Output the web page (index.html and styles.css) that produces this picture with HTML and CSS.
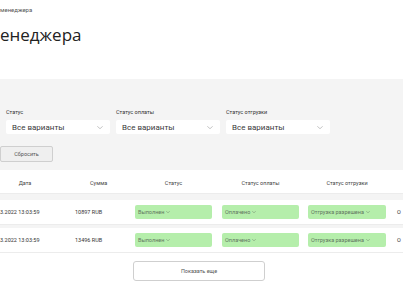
FILE: index.html
```html
<!DOCTYPE html>
<html lang="ru">
<head>
<meta charset="utf-8">
<link rel="stylesheet" href="styles.css">
</head>
<body>
<div class="page">
  <div class="breadcrumb">менеджера</div>
  <h1 class="title">енеджера</h1>

  <section class="filters">
    <div class="filter-grid">
      <div class="field">
        <div class="label">Статус</div>
        <div class="select"><span>Все варианты</span><svg class="chev" viewBox="0 0 6 3"><path d="M0.3 0.3 L3 2.7 L5.7 0.3"/></svg></div>
      </div>
      <div class="field">
        <div class="label">Статус оплаты</div>
        <div class="select"><span>Все варианты</span><svg class="chev" viewBox="0 0 6 3"><path d="M0.3 0.3 L3 2.7 L5.7 0.3"/></svg></div>
      </div>
      <div class="field">
        <div class="label">Статус отгрузки</div>
        <div class="select"><span>Все варианты</span><svg class="chev" viewBox="0 0 6 3"><path d="M0.3 0.3 L3 2.7 L5.7 0.3"/></svg></div>
      </div>
    </div>
    <button class="reset">Сбросить</button>
  </section>

  <div class="table">
    <div class="row head">
      <div class="c c-date">Дата</div>
      <div class="c c-sum">Сумма</div>
      <div class="c">Статус</div>
      <div class="c">Статус оплаты</div>
      <div class="c">Статус отгрузки</div>
      <div class="c"></div>
    </div>
    <div class="body">
      <div class="row item">
        <div class="c c-date">3.2022 13:03:59</div>
        <div class="c c-sum">10897 RUB</div>
        <div class="c"><span class="badge">Выполнен <svg class="bchev" viewBox="0 0 6 3"><path d="M0.3 0.3 L3 2.7 L5.7 0.3"/></svg></span></div>
        <div class="c"><span class="badge">Оплачено <svg class="bchev" viewBox="0 0 6 3"><path d="M0.3 0.3 L3 2.7 L5.7 0.3"/></svg></span></div>
        <div class="c c-ship"><span class="badge">Отгрузка разрешена <svg class="bchev" viewBox="0 0 6 3"><path d="M0.3 0.3 L3 2.7 L5.7 0.3"/></svg></span></div>
        <div class="c c-last">О</div>
      </div>
      <div class="row item">
        <div class="c c-date">3.2022 13:03:59</div>
        <div class="c c-sum">13496 RUB</div>
        <div class="c"><span class="badge">Выполнен <svg class="bchev" viewBox="0 0 6 3"><path d="M0.3 0.3 L3 2.7 L5.7 0.3"/></svg></span></div>
        <div class="c"><span class="badge">Оплачено <svg class="bchev" viewBox="0 0 6 3"><path d="M0.3 0.3 L3 2.7 L5.7 0.3"/></svg></span></div>
        <div class="c c-ship"><span class="badge">Отгрузка разрешена <svg class="bchev" viewBox="0 0 6 3"><path d="M0.3 0.3 L3 2.7 L5.7 0.3"/></svg></span></div>
        <div class="c c-last">О</div>
      </div>
    </div>
  </div>

  <div class="more-wrap">
    <button class="more">Показать еще</button>
  </div>
</div>
</body>
</html>
```

FILE: styles.css
```css
* { box-sizing: border-box; }
html, body { margin: 0; padding: 0; background: #fff; }
body {
  width: 403px;
  height: 294px;
  overflow: hidden;
  font-family: Roboto, "Liberation Sans", Arial, sans-serif;
  color: #333;
}
.page { padding-top: 6px; }

.breadcrumb {
  font-size: 6px;
  line-height: 8px;
  color: #555;
}
.title {
  margin: 10px 0 0 0;
  font-family: "Open Sans", "Noto Sans", sans-serif;
  font-weight: 400;
  font-size: 17px;
  line-height: 22px;
  color: #222;
}

.filters {
  margin-top: 33px;
  background: #f4f4f4;
  padding: 29px 0 8px 0;
}
.filter-grid {
  display: grid;
  grid-template-columns: 104px 104px 104px;
  column-gap: 6px;
  padding-left: 6px;
}
.label {
  font-size: 5.5px;
  line-height: 8px;
  color: #333;
  margin-bottom: 4px;
}
.select {
  height: 14px;
  background: #fff;
  border-radius: 2px;
  display: flex;
  align-items: center;
  justify-content: space-between;
  padding: 0 7px 0 6px;
  font-size: 8px;
  color: #3a3a3a;
}
.chev {
  width: 6px;
  height: 3px;
  fill: none;
  stroke: #a0a0a0;
  stroke-width: 0.6;
}
.reset {
  display: block;
  margin-top: 12px;
  width: 53px;
  height: 16px;
  padding: 0;
  background: #efefef;
  border: 1px solid #cfcfcf;
  border-radius: 2px;
  font-family: Roboto, "Liberation Sans", Arial, sans-serif;
  font-size: 5.5px;
  color: #555;
}

.table { width: 403px; overflow: hidden; }
.row {
  display: grid;
  grid-template-columns: 70px 60px 87px 87px 86px 13px;
  align-items: center;
}
.head {
  height: 24px;
  padding-top: 2px;
  font-size: 5.5px;
  color: #444;
  text-align: center;
  background: #fff;
  border-bottom: 1px solid #ececec;
}
.head .c-date { padding-right: 20px; }
.head .c-sum { padding-left: 20px; text-align: left; }
.body {
  background: #f4f4f4;
  padding-top: 6px;
  display: flex;
  flex-direction: column;
  gap: 3px;
}
.item {
  height: 25px;
  background: #fff;
  border-bottom: 1px solid #ececec;
  font-size: 5.5px;
  color: #333;
}
.item .c-sum { padding-left: 5px; }
.item .c { display: flex; align-items: center; }
.item .c .badge { margin: 0 5px; }
.item .c-ship .badge { margin: 0 4px; }
.item .c-last { padding-left: 7px; }
.badge {
  flex: 1;
  height: 14px;
  display: flex;
  align-items: center;
  gap: 2px;
  padding-left: 3px;
  background: #b5eeab;
  border-radius: 2px;
  color: #62755f;
  font-size: 5.5px;
}
.bchev {
  width: 4px;
  height: 2px;
  fill: none;
  stroke: #6d7f6a;
  stroke-width: 0.7;
}

.more-wrap {
  display: flex;
  justify-content: center;
  padding-right: 5px;
  margin-top: 8px;
}
.more {
  width: 132px;
  height: 20px;
  padding: 0;
  background: #fff;
  border: 1px solid #cfcfcf;
  border-radius: 3px;
  font-family: Roboto, "Liberation Sans", Arial, sans-serif;
  font-size: 5.5px;
  color: #555;
}
```
